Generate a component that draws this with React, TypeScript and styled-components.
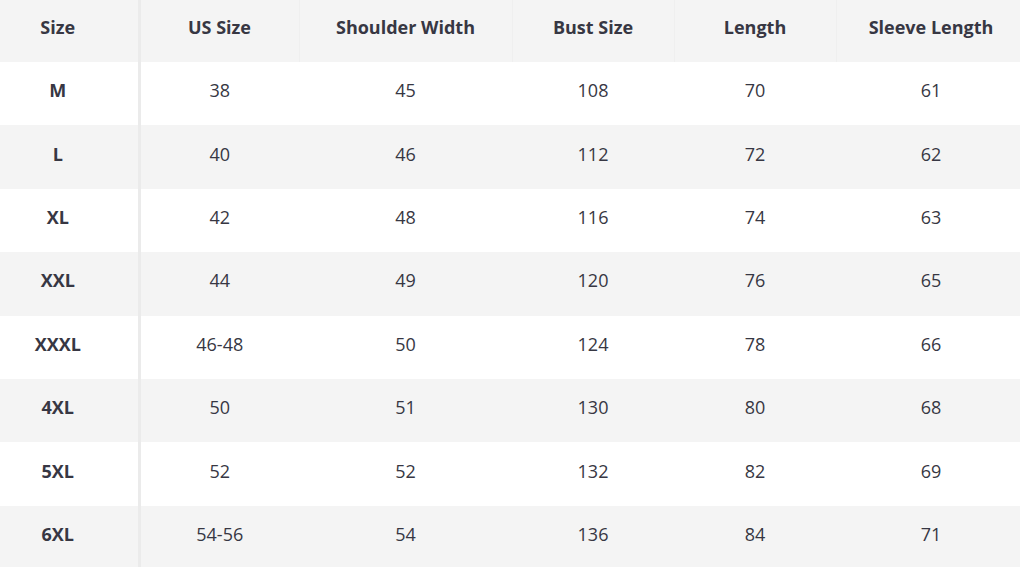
import React from "react";
import styled, { createGlobalStyle } from "styled-components";

const Global = createGlobalStyle`
  html, body { margin: 0; padding: 0; background: #fff; }
  body { font-family: "Open Sans", Lato, sans-serif; color: #373743; overflow: hidden; }
`;

const Wrap = styled.div`
  width: 1020px;
  height: 567px;
  overflow: hidden;
`;

const Table = styled.table`
  border-collapse: collapse;
  table-layout: fixed;
  width: 1026px;
`;

const HeadCell = styled.th<{ $first?: boolean; $w: number }>`
  width: ${(p) => p.$w}px;
  height: 62px;
  padding: 0 ${(p) => (p.$first ? "22px" : "0")} 9px 0;
  box-sizing: border-box;
  background: #f4f4f4;
  font-weight: 700;
  font-size: 18px;
  text-align: center;
  border-right: ${(p) => (p.$first ? "3px solid #ebebeb" : "1px solid #efefef")};
`;

const Row = styled.tr<{ $alt: boolean }>`
  background: ${(p) => (p.$alt ? "#f4f4f4" : "#ffffff")};
`;

const Cell = styled.td<{ $first?: boolean }>`
  height: 63.4px;
  padding: 0 ${(p) => (p.$first ? "22px" : "0")} 7px 0;
  box-sizing: border-box;
  text-align: center;
  font-size: 18px;
  font-weight: ${(p) => (p.$first ? 700 : 400)};
  border-right: ${(p) => (p.$first ? "3px solid #ebebeb" : "none")};
`;

const headers = ["Size", "US Size", "Shoulder Width", "Bust Size", "Length", "Sleeve Length"];
const widths = [139, 160, 213, 162, 162, 190];

const rows = [
  ["M", "38", "45", "108", "70", "61"],
  ["L", "40", "46", "112", "72", "62"],
  ["XL", "42", "48", "116", "74", "63"],
  ["XXL", "44", "49", "120", "76", "65"],
  ["XXXL", "46-48", "50", "124", "78", "66"],
  ["4XL", "50", "51", "130", "80", "68"],
  ["5XL", "52", "52", "132", "82", "69"],
  ["6XL", "54-56", "54", "136", "84", "71"],
];

export default function App() {
  return (
    <Wrap>
      <Global />
      <Table>
        <thead>
          <tr>
            {headers.map((h, i) => (
              <HeadCell key={h} $first={i === 0} $w={widths[i]}>
                {h}
              </HeadCell>
            ))}
          </tr>
        </thead>
        <tbody>
          {rows.map((r, ri) => (
            <Row key={r[0]} $alt={ri % 2 === 1}>
              {r.map((c, ci) => (
                <Cell key={ci} $first={ci === 0}>
                  {c}
                </Cell>
              ))}
            </Row>
          ))}
        </tbody>
      </Table>
    </Wrap>
  );
}
